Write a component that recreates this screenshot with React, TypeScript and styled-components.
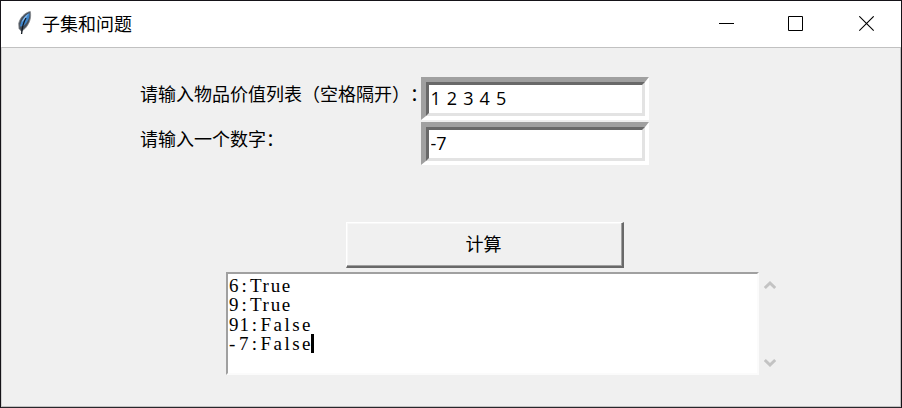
import React from "react";
import styled, { createGlobalStyle } from "styled-components";

const GlobalStyle = createGlobalStyle`
  * { box-sizing: border-box; }
  body { margin: 0; background: #f0f0f0; }
`;

const Window = styled.div`
  width: 902px;
  height: 408px;
  display: flex;
  flex-direction: column;
  background: #f0f0f0;
  border: 1px solid #151318;
  border-bottom-color: #29272b;
  overflow: hidden;
  color: #000;
  font-family: "Open Sans", "Noto Sans CJK SC", sans-serif;
`;

const TitleBar = styled.header`
  height: 46px;
  flex: none;
  display: flex;
  align-items: center;
  justify-content: space-between;
  background: #fff;
`;

const TitleGroup = styled.div`
  display: flex;
  align-items: center;
  padding: 0 0 2px 14px;
`;

const Title = styled.h1`
  margin: 0 0 0 7px;
  font: 400 18px/24px "Noto Sans CJK SC", sans-serif;
`;

const Controls = styled.div`
  display: flex;
  gap: 53px;
  padding-right: 26px;
`;

const ControlButton = styled.button`
  width: 16px;
  height: 16px;
  padding: 0;
  border: 0;
  background: transparent;
  svg { display: block; }
  &:last-child { margin-left: 2px; }
`;

const Client = styled.main`
  flex: 1;
  border: 1px solid #c1c1c1;
  border-left-color: #d0d0d0;
  display: flex;
  flex-direction: column;
  align-items: flex-start;
`;

const Form = styled.form`
  display: grid;
  grid-template-columns: 281px 228px;
  row-gap: 2px;
  margin: 29px 0 0 138px;
`;

const Label = styled.label`
  padding-top: 4px;
  font: 400 18px/24px "Noto Sans CJK SC", sans-serif;
  text-spacing-trim: space-all;
  white-space: nowrap;
  height: 43px;
`;

const Sunken = styled.div`
  height: 43px;
  border: solid;
  border-width: 5px 4px 4px 5px;
  border-color: #a0a0a0 #fff #fff #a0a0a0;
`;

const Entry = styled.input`
  display: block;
  width: 100%;
  height: 34px;
  border: 3px solid;
  border-color: #696969 #e3e3e3 #e3e3e3 #696969;
  border-radius: 0;
  padding: 0 1px 3px 1.5px;
  background: #fff;
  color: #000;
  outline: 0;
  font: 400 18px/24px "Open Sans", sans-serif;
  word-spacing: 1.4px;
`;

const CalcButton = styled.button`
  width: 278px;
  height: 46px;
  margin: 57px 0 0 344px;
  padding: 0 2px 4px 0;
  background: #f0f0f0;
  border: solid;
  border-width: 1px 2px 2px 1px;
  border-color: #fff #696969 #696969 #fff;
  box-shadow: inset -1px -1px #a0a0a0, inset 1px 1px #f7f7f7;
  color: #000;
  font: 400 18px/24px "Noto Sans CJK SC", sans-serif;
`;

const OutputRow = styled.div`
  display: flex;
  margin: 4px 0 0 224px;
`;

const Output = styled.div`
  width: 533px;
  height: 103px;
  padding: 1.5px 0 0 1px;
  background: #fff;
  border: 2px solid;
  border-color: #a0a0a0 #fbfbfb #fbfbfb #a0a0a0;
  font: 400 19px/19.5px "Liberation Serif", serif;
  color: #000;
`;

const Line = styled.div`
  display: flex;
  height: 19.5px;
`;

const Key = styled.span<{ $chars: number; $negative: boolean }>`
  width: ${(p) => p.$chars * 10.4}px;
  letter-spacing: ${(p) => (p.$negative ? 3.6 : 0.9)}px;
`;

const Colon = styled.span`
  width: 10.6px;
  padding-left: 2px;
`;

const Value = styled.span<{ $spacing: number }>`
  letter-spacing: ${(p) => p.$spacing}px;
`;

const Caret = styled.span`
  width: 3px;
  height: 19px;
  margin-left: -2px;
  background: #000;
`;

const ScrollBar = styled.div`
  width: 21px;
  height: 103px;
  display: flex;
  flex-direction: column;
  justify-content: space-between;
  align-items: center;
  padding: 8px 0 7px;
`;

const results = [
  { key: "6", value: "True" },
  { key: "9", value: "True" },
  { key: "91", value: "False" },
  { key: "-7", value: "False" },
];

function Feather() {
  return (
    <svg width="20" height="26" viewBox="0 0 20 26">
      <path d="M15.3 1.5C10 2.5 5 7.5 3.7 13.5L4 18.5L6.5 21.5L10.5 18C14.5 13.5 16.5 7.5 15.3 1.5Z" fill="#46505c" stroke="#85888c" strokeWidth=".8" />
      <path d="M14.5 3C9.5 5.5 6 10.5 5 16.5L8.5 16C12.5 12.5 15 7.5 14.5 3Z" fill="#3f86cc" />
      <path d="M13.8 3.5C9.5 6.5 7.5 9.5 6.5 12.5L10 9Z" fill="#91bde8" />
      <path d="M11 8C8.5 12 7.2 16 6.6 24" fill="none" stroke="#111820" strokeWidth="1.3" />
    </svg>
  );
}

function Arrow({ down = false }: { down?: boolean }) {
  return (
    <svg width="12" height="10" viewBox="0 0 12 10">
      <path d={down ? "M.8 2L6 7L11.2 2" : "M.8 8L6 3L11.2 8"} fill="none" stroke="#c3c3c3" strokeWidth="3" />
    </svg>
  );
}

export default function App() {
  return (
    <>
      <GlobalStyle />
      <Window>
        <TitleBar>
          <TitleGroup>
            <Feather />
            <Title>子集和问题</Title>
          </TitleGroup>
          <Controls>
            <ControlButton aria-label="最小化">
              <svg width="16" height="16"><path d="M0 7.5H15" stroke="#000" /></svg>
            </ControlButton>
            <ControlButton aria-label="最大化">
              <svg width="16" height="16"><path d="M.5.5H14.5V14.5H.5Z" fill="none" stroke="#000" /></svg>
            </ControlButton>
            <ControlButton aria-label="关闭">
              <svg width="16" height="16"><path d="M.3.3L14.7 14.7M14.7 .3L.3 14.7" stroke="#000" strokeWidth="1.1" /></svg>
            </ControlButton>
          </Controls>
        </TitleBar>
        <Client>
          <Form>
            <Label htmlFor="items">请输入物品价值列表（空格隔开）：</Label>
            <Sunken><Entry id="items" defaultValue="1 2 3 4 5" /></Sunken>
            <Label htmlFor="target">请输入一个数字：</Label>
            <Sunken><Entry id="target" defaultValue="-7" /></Sunken>
          </Form>
          <CalcButton>计算</CalcButton>
          <OutputRow>
            <Output>
              {results.map((r, i) => (
                <Line key={r.key}>
                  <Key $chars={r.key.length} $negative={r.key.startsWith("-")}>{r.key}</Key>
                  <Colon>:</Colon>
                  <Value $spacing={r.value === "True" ? 1.7 : 2.5}>{r.value}</Value>
                  {i === results.length - 1 && <Caret />}
                </Line>
              ))}
            </Output>
            <ScrollBar>
              <Arrow />
              <Arrow down />
            </ScrollBar>
          </OutputRow>
        </Client>
      </Window>
    </>
  );
}
